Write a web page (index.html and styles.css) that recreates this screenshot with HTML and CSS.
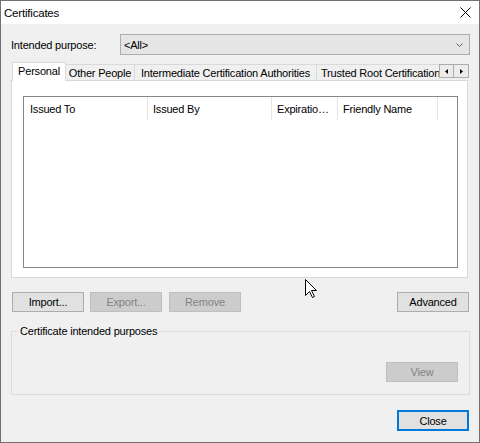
FILE: index.html
```html
<!DOCTYPE html>
<html>
<head>
<meta charset="utf-8">
<link rel="stylesheet" href="styles.css">
</head>
<body>
<div class="window">
  <div class="titlebar">
    <span class="title">Certificates</span>
    <svg class="close-x" width="11" height="11" viewBox="0 0 11 11"><path d="M0.5 0.5L10.5 10.5M10.5 0.5L0.5 10.5" stroke="#000" stroke-width="1" fill="none"/></svg>
  </div>
  <div class="client">
    <div class="purpose-row">
      <span class="purpose-label">Intended purpose:</span>
      <div class="combo">
        <span>&lt;All&gt;</span>
        <svg width="7" height="4" viewBox="0 0 7 4"><polyline points="0.5,0.5 3.5,3.5 6.5,0.5" stroke="#606060" fill="none"/></svg>
      </div>
    </div>
    <div class="tabstrip">
      <div class="tab selected tab-personal">Personal</div>
      <div class="tab tab-other">Other People</div>
      <div class="tab tab-inter">Intermediate Certification Authorities</div>
      <div class="tab tab-trusted">Trusted Root Certification Authorities</div>
      <div class="tab-scroll">
        <div class="arrow-btn"><svg width="3" height="5" viewBox="0 0 3 5"><polygon points="3,0 3,5 0,2.5" fill="#000"/></svg></div>
        <div class="arrow-btn"><svg width="3" height="5" viewBox="0 0 3 5"><polygon points="0,0 0,5 3,2.5" fill="#000"/></svg></div>
      </div>
    </div>
    <div class="panel">
      <div class="listview">
        <div class="lv-header">
          <div class="col col-to">Issued To</div>
          <div class="col col-by">Issued By</div>
          <div class="col col-exp">Expiratio…</div>
          <div class="col col-name">Friendly Name</div>
        </div>
      </div>
    </div>
    <div class="actions">
      <button class="btn btn-import">Import...</button>
      <button class="btn btn-export" disabled>Export...</button>
      <button class="btn btn-remove" disabled>Remove</button>
      <button class="btn btn-advanced">Advanced</button>
    </div>
    <fieldset class="group">
      <legend>Certificate intended purposes</legend>
      <div class="group-body">
        <button class="btn" disabled>View</button>
      </div>
    </fieldset>
    <div class="footer">
      <button class="btn btn-default">Close</button>
    </div>
  </div>
  <svg class="cursor" width="13" height="20" viewBox="0 0 13 20"><path d="M0.5 0.5L0.5 16.5L4.5 12.5L7.5 18.5L9.5 17.5L6.5 11.5L11.5 11.5Z" fill="#fff" stroke="#000" stroke-width="1" stroke-linejoin="miter"/></svg>
</div>
</body>
</html>
```
FILE: styles.css
```css
body {
  margin: 0;
  background: #ffffff;
  font-family: "Liberation Sans", Arial, sans-serif;
  font-size: 11px;
  letter-spacing: -0.2px;
  color: #000;
}

.window {
  position: relative;
  width: 480px;
  height: 443px;
  box-sizing: border-box;
  border: 1px solid #717171;
  background: #f0f0f0;
  display: flex;
  flex-direction: column;
  overflow: hidden;
}

.titlebar {
  height: 23px;
  flex: none;
  background: #ffffff;
  display: flex;
  align-items: center;
  justify-content: space-between;
  padding: 0 8px 0 3px;
}

.title {
  font-size: 11.5px;
}

.close-x {
  display: block;
}

.client {
  flex: 1;
  display: flex;
  flex-direction: column;
  padding: 10px 9px 0 10px;
}

.purpose-row {
  display: flex;
  align-items: center;
  height: 21px;
}

.purpose-label {
  width: 109px;
  flex: none;
}

.combo {
  flex: 1;
  height: 21px;
  box-sizing: border-box;
  border: 1px solid #adadad;
  background: #e5e5e5;
  display: flex;
  align-items: center;
  justify-content: space-between;
  padding: 0 6px 0 3px;
}

.combo svg {
  display: block;
}

.tabstrip {
  display: flex;
  align-items: flex-end;
  height: 18px;
  margin-top: 7px;
  padding-left: 1px;
  position: relative;
  z-index: 1;
}

.tab {
  height: 16px;
  box-sizing: border-box;
  border: 1px solid #d9d9d9;
  border-bottom: none;
  background: #f0f0f0;
  display: flex;
  align-items: center;
  justify-content: center;
  white-space: nowrap;
  margin-left: -1px;
  flex: none;
  padding-top: 1px;
}

.tab.selected {
  height: 19px;
  background: #ffffff;
  margin-left: 0;
  margin-bottom: -1px;
  padding-top: 0;
  padding-bottom: 2px;
}

.tab-personal { width: 54px; }
.tab-other { width: 70px; }
.tab-inter { width: 183px; }

.tab-trusted {
  flex: 1;
  min-width: 0;
  overflow: hidden;
  justify-content: flex-start;
  padding-left: 4px;
  border-right: none;
}

.tab-scroll {
  align-self: flex-start;
  margin-top: 2px;
  margin-right: 1px;
  display: flex;
}

.arrow-btn {
  width: 15px;
  height: 14px;
  box-sizing: border-box;
  border: 1px solid #adadad;
  background: #ececec;
  display: flex;
  align-items: center;
  justify-content: center;
}

.arrow-btn + .arrow-btn {
  margin-left: -1px;
  width: 16px;
}

.arrow-btn svg {
  display: block;
}

.panel {
  height: 198px;
  flex: none;
  box-sizing: border-box;
  border: 1px solid #d9d9d9;
  background: #ffffff;
  margin-right: 2px;
  padding: 15px 9px 9px 11px;
}

.listview {
  height: 100%;
  box-sizing: border-box;
  border: 1px solid #828790;
  background: #ffffff;
}

.lv-header {
  display: flex;
  height: 23px;
}

.col {
  box-sizing: border-box;
  border-right: 1px solid #e5e5e5;
  padding-left: 6px;
  display: flex;
  align-items: center;
  white-space: nowrap;
  overflow: hidden;
  flex: none;
}

.col-to { width: 124px; }
.col-by { width: 124px; padding-left: 5px; }
.col-exp { width: 66px; padding-left: 5px; }
.col-name { width: 100px; padding-left: 5px; }

.actions {
  display: flex;
  margin-top: 14px;
  margin-right: 1px;
}

.btn {
  width: 72px;
  height: 20px;
  box-sizing: border-box;
  border: 1px solid #adadad;
  background: #e1e1e1;
  font: inherit;
  letter-spacing: inherit;
  color: #000;
  padding: 0;
  margin: 0;
}

.btn:disabled {
  background: #cccccc;
  border-color: #bfbfbf;
  color: #838383;
}

.btn-import { margin-left: 1px; }
.btn-export { margin-left: 6px; }
.btn-remove { margin-left: 7px; }
.btn-advanced { margin-left: auto; }

.group {
  margin: 13px 0 0;
  padding: 0;
  border: 1px solid #dcdcdc;
  min-width: 0;
}

.group legend {
  margin-left: 6px;
  padding: 0 2px;
  line-height: 13px;
}

.group-body {
  display: flex;
  justify-content: flex-end;
  padding: 24px 11px 12px;
}

.footer {
  display: flex;
  justify-content: flex-end;
  margin-top: 15px;
  margin-right: 1px;
}

.btn-default {
  height: 21px;
  border: 2px solid #0078d7;
}

.cursor {
  position: absolute;
  left: 304px;
  top: 278px;
}
```
